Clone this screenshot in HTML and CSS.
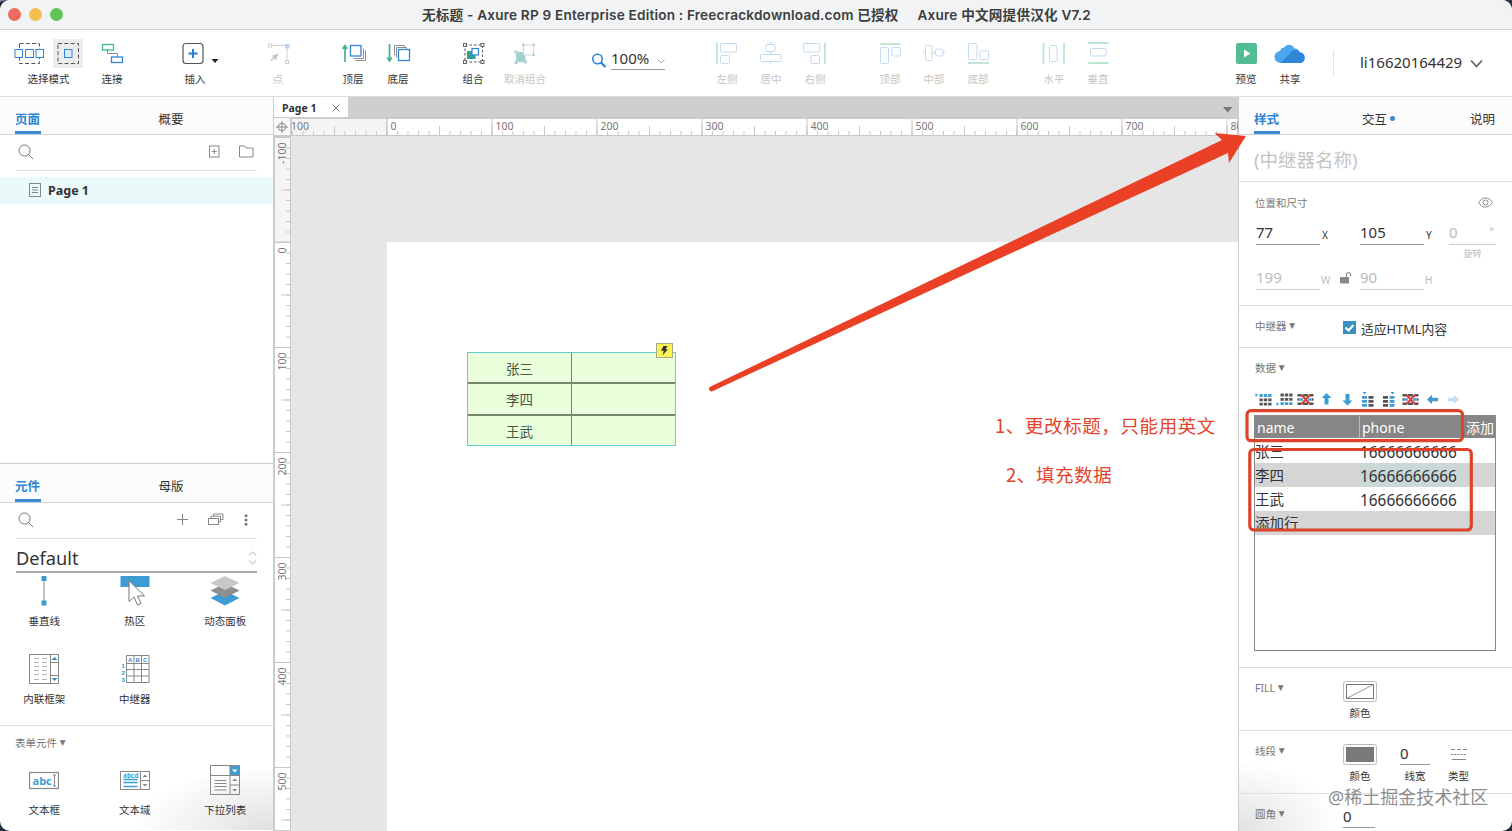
FILE: index.html
```html
<!DOCTYPE html>
<html lang="zh-CN">
<head>
<meta charset="utf-8">
<title>无标题 - Axure RP 9</title>
<link rel="stylesheet" href="styles.css">
</head>
<body>
<div class="window">
  <header class="titlebar">
    <div class="lights"><i class="light red"></i><i class="light amber"></i><i class="light green"></i></div>
    <div class="title"><span class="title-doc">无标题 - Axure RP 9 Enterprise Edition : Freecrackdownload.com 已授权</span><span class="title-ver">Axure 中文网提供汉化 V7.2</span></div>
  </header>

  <div class="toolbar">
    <div class="tool mode">
      <svg width="90" height="30" fill="none"><rect x="53" y="1" width="30" height="29" fill="#ececec"/><g stroke="#555" stroke-dasharray="4 2.3"><rect x="19.5" y="5.5" width="20" height="20"/><rect x="58" y="5.5" width="20.5" height="20"/></g><g stroke="#2e86d6" fill="#fff"><rect x="15" y="11.5" width="7.5" height="8"/><rect x="25.5" y="11.5" width="8" height="8"/><rect x="36" y="11.5" width="7.5" height="8"/><rect x="64.5" y="11.5" width="7.5" height="8" fill="#dfe9f5"/></g></svg>
      <span>选择模式</span>
    </div>
    <div class="tool">
      <svg width="44" height="30" fill="none"><path d="M17.5 12v3.5h10V19" stroke="#888"/><rect x="12.5" y="6.5" width="11" height="5.5" stroke="#3db88a" stroke-width="1.3"/><rect x="21.5" y="19" width="11" height="5.5" stroke="#2e86d6" stroke-width="1.3"/></svg>
      <span>连接</span>
    </div>
    <div class="tool g38 insert">
      <svg width="46" height="30" fill="none"><rect x="11" y="5.5" width="20" height="20" rx="3" stroke="#555" stroke-width="1.2"/><path d="M21 11v9M16.500 15.500h9" stroke="#1f7fd6" stroke-width="2"/><path d="M39.500 21h7l-3.500 4z" fill="#222"/></svg>
      <span>插入</span>
    </div>
    <div class="tool g38 off">
      <svg width="44" height="30" fill="none" stroke="#cfcfcf"><path d="M16 7.500h13M31 10v13"/><rect x="12.500" y="6" width="3" height="3"/><rect x="29.500" y="6.500" width="3.500" height="3.500" fill="#b5d5f2" stroke="#b5d5f2"/><rect x="29.500" y="22.500" width="3" height="3"/><path d="M22.500 15.500l-7.500 2.500 2.500 1-3 3.500 1 .7 3-3 1.200 2.500z" fill="#c4c4c4" stroke="none"/></svg>
      <span>点</span>
    </div>
    <div class="tool g31">
      <svg width="44" height="30" fill="none"><path d="M14 24V8M11.800 11L14 7.500l2.200 3.500" stroke="#3fb58c" stroke-width="1.700"/><g stroke="#8b8f99"><path d="M32.500 10.500V20.500H22.500M34.500 12.500V22.500H24.500"/></g><rect x="19.500" y="7.500" width="10.500" height="10.500" stroke="#3487d8" stroke-width="1.300" fill="#fff"/></svg>
      <span>顶层</span>
    </div>
    <div class="tool g1">
      <svg width="44" height="30" fill="none"><path d="M13.500 6V22M11.300 19.500l2.200 3.500 2.200-3.500" stroke="#3fb58c" stroke-width="1.700"/><g stroke="#8b8f99"><path d="M18.500 17.500V7.500H28.500V10M20.500 19.500V9.500H30.500V11"/></g><rect x="22.500" y="11.500" width="11" height="11" stroke="#3487d8" stroke-width="1.300" fill="#fff"/></svg>
      <span>底层</span>
    </div>
    <div class="tool g31">
      <svg width="44" height="30" fill="none"><rect x="14" y="7" width="17.500" height="17" stroke="#555" stroke-dasharray="2.500 2"/><g fill="#fff" stroke="#666"><rect x="12.500" y="5.500" width="3" height="3"/><rect x="30" y="5.500" width="3" height="3"/><rect x="12.500" y="22.500" width="3" height="3"/><rect x="30" y="22.500" width="3" height="3"/></g><rect x="16" y="13" width="8.500" height="8" fill="#2f9f98"/><rect x="21" y="10.500" width="6.500" height="6.500" fill="#fff" stroke="#2e86d6" stroke-width="1.200"/></svg>
      <span>组合</span>
    </div>
    <div class="tool g8 off">
      <svg width="44" height="30" fill="none"><path d="M13 14h9.500v10H13z" fill="#9fd2cf"/><rect x="20.500" y="7" width="10" height="10" fill="#fff" stroke="#c8d8e8"/><g fill="#b9cfdc"><rect x="11.500" y="12.500" width="3" height="3"/><rect x="11.500" y="23" width="3" height="3"/><rect x="21" y="22.500" width="3" height="3"/><rect x="19" y="5.500" width="2.500" height="2.500"/><rect x="29.500" y="5.500" width="2.500" height="2.500"/><rect x="29.500" y="15.500" width="2.500" height="2.500"/></g></svg>
      <span>取消组合</span>
    </div>
    <div class="zoom">
      <svg width="16" height="16" fill="none" stroke="#2b82d9"><circle cx="6.500" cy="6" r="4.700" stroke-width="1.600"/><path d="M10 9.500l4.500 4.500" stroke-width="2.200"/></svg>
      <div class="zoom-val">100%<svg width="8" height="5" fill="none" stroke="#aaa"><path d="M.5.5L4 4 7.500.5"/></svg></div>
    </div>
    <div class="tool g40 off align">
      <svg width="44" height="30"><path class="grn" d="M12 5v21"/><rect x="15.500" y="5.500" width="16" height="8.500" rx="1"/><rect x="15.500" y="17.500" width="9" height="8" rx="1"/></svg>
      <span>左侧</span>
    </div>
    <div class="tool off align">
      <svg width="44" height="30"><path d="M21.500 4v2.500M21.500 13.500v3M21.500 23.500V26"/><rect x="17" y="6.500" width="9" height="7" rx="1"/><rect x="11.500" y="16.500" width="20.500" height="7" rx="1"/></svg>
      <span>居中</span>
    </div>
    <div class="tool off align">
      <svg width="44" height="30"><path class="grn" d="M32 5v21"/><rect x="10.500" y="5.500" width="16" height="8.500" rx="1"/><rect x="18" y="17.500" width="8.500" height="8" rx="1"/></svg>
      <span>右侧</span>
    </div>
    <div class="tool g31 off align">
      <svg width="44" height="30"><path class="grn" d="M12 6h20.500"/><rect x="12.500" y="9.500" width="8" height="16" rx="1"/><rect x="24" y="9.500" width="8.500" height="8.500" rx="1"/></svg>
      <span>顶部</span>
    </div>
    <div class="tool off align">
      <svg width="44" height="30"><path d="M11 14.500h2.500M20 14.500h3.500M31 14.500h2"/><rect x="13.500" y="7.500" width="6.500" height="15" rx="1"/><rect x="23.500" y="11" width="7.500" height="7" rx="2"/></svg>
      <span>中部</span>
    </div>
    <div class="tool off align">
      <svg width="44" height="30"><path class="grn" d="M12 25h21"/><rect x="12.500" y="5.500" width="8.500" height="16" rx="1"/><rect x="24" y="13" width="8.500" height="8.500" rx="1"/></svg>
      <span>底部</span>
    </div>
    <div class="tool g32 off align">
      <svg width="44" height="30"><path class="grn" d="M11.500 5v21M32 5v21"/><rect x="17.500" y="7.500" width="7.500" height="16" rx="1"/></svg>
      <span>水平</span>
    </div>
    <div class="tool off align">
      <svg width="44" height="30"><path class="grn" d="M12 5h20.500M12 25h20.500"/><rect x="14.500" y="10.500" width="15.500" height="7.500" rx="1"/></svg>
      <span>垂直</span>
    </div>
    <div class="tool g104">
      <svg width="44" height="30"><rect x="12" y="5" width="21" height="21" rx="2" fill="#52bd93"/><path d="M20 11.500l6.500 4-6.500 4z" fill="#fff"/></svg>
      <span>预览</span>
    </div>
    <div class="tool">
      <svg width="44" height="30"><path d="M13 25a6 6 0 0 1-1-12 5 5 0 0 1 4-3.500 6 6 0 0 1 10.500 1 5 5 0 0 1 5 3.500 5.600 5.600 0 0 1 1 11z" fill="#4aa6ee"/><path d="M12.500 25L25 12.200a6 6 0 0 1 7 2.500 5.300 5.300 0 0 1 1 10.300z" fill="#2f86d8"/></svg>
      <span>共享</span>
    </div>
    <div class="user"><span>li16620164429</span><svg width="13" height="9" fill="none" stroke="#666" stroke-width="1.800"><path d="M1 1.500l5.500 6 5.500-6"/></svg></div>
  </div>

  <div class="main">
    <aside class="left">
      <section class="pages">
        <nav class="tabs"><b>页面</b><span>概要</span></nav>
        <div class="search">
          <svg width="16" height="16" fill="none" stroke="#777"><circle cx="6.500" cy="6.500" r="5.500"/><path d="M10.500 10.500l4.500 4.500"/></svg>
          <div class="search-acts">
            <svg width="11" height="13" fill="none" stroke="#888"><rect x=".5" y="1" width="9.500" height="11"/><path d="M5.250 4v5M2.750 6.500h5"/></svg>
            <svg width="15" height="13" fill="none" stroke="#888"><path d="M.5 1h5l1.500 2h7v9H.5z"/></svg>
          </div>
        </div>
        <div class="page-row"><svg width="12" height="14" fill="none" stroke="#7d8a8a"><rect x=".5" y=".5" width="11" height="13"/><path d="M3 4.500h6M3 7h6M3 9.500h6"/></svg><b>Page 1</b></div>
      </section>
      <section class="library">
        <nav class="tabs"><b>元件</b><span>母版</span></nav>
        <div class="search">
          <svg width="16" height="16" fill="none" stroke="#777"><circle cx="6.500" cy="6.500" r="5.500"/><path d="M10.500 10.500l4.500 4.500"/></svg>
          <div class="search-acts lib">
            <svg width="11" height="11" fill="none" stroke="#888"><path d="M5.500 0v11M0 5.500h11"/></svg>
            <svg width="16" height="13" fill="none" stroke="#888"><rect x=".5" y="5.500" width="10" height="6"/><path d="M3 5.500V3.200h9.500V9H10.500M5.500 3V1H15v5.500h-2.500"/></svg>
            <svg width="4" height="12" fill="#777"><circle cx="2" cy="1.700" r="1.500"/><circle cx="2" cy="6" r="1.500"/><circle cx="2" cy="10.300" r="1.500"/></svg>
          </div>
        </div>
        <div class="lib-select"><span>Default</span><svg width="9" height="14" fill="none" stroke="#aaa"><path d="M.8 4.500L4.500 1l3.700 3.500M.8 9.500L4.500 13l3.700-3.500"/></svg></div>
        <div class="widgets">
          <div class="widget"><svg width="30" height="30"><path d="M15 3v24" stroke="#8a8a8a"/><path d="M12.500 0h5v5h-5zM12.500 24.500h5v5h-5z" fill="#3f9bd3"/></svg><span>垂直线</span></div>
          <div class="widget"><svg width="30" height="30"><path d="M.5 0h29v11H.5z" fill="#3f9bd3"/><path d="M9 4.500v21l5-4.500 3.500 8 3.500-1.700-3.500-7.300h7z" fill="#fff" stroke="#777"/></svg><span>热区</span></div>
          <div class="widget"><svg width="30" height="30"><path d="M15 15l14.500 7L15 29.500.5 22z" fill="#3f9bd3"/><path d="M15 7.500l14.500 7L15 22 .5 14.500z" fill="#8e8e8e"/><path d="M15 0l14.500 7L15 14 .5 7z" fill="#c8c8c8"/></svg><span>动态面板</span></div>
          <div class="widget"><svg width="30" height="30" fill="none" stroke="#888"><rect x=".5" y=".5" width="29" height="29"/><path d="M21.500 0v30M21.500 8.500H30M21.500 21.500H30"/><path d="M5 4.500h5M13 4.500h5M5 8.500h5M13 8.500h5M5 12.500h5M13 12.500h5M5 16.500h5M13 16.500h5M5 20.500h5M13 20.500h5M5 25.500h5M13 25.500h5" stroke="#b5b5b5"/><path d="M25.500 3l3 3h-6zM25.500 27l3-3h-6z" fill="#2f8dd0" stroke="none"/></svg><span>内联框架</span></div>
          <div class="widget"><svg width="30" height="30" fill="none" stroke="#888"><path d="M6.500 1.500H29V28.500H6.500zM6.500 9.500H29M6.500 15.500H29M6.500 22H29M14 1.500v27M21.500 1.500v27"/><g class="mini"><text x="8" y="7.500">A</text><text x="15.500" y="7.500">B</text><text x="23" y="7.500">C</text><text x="1.500" y="14">1</text><text x="1.500" y="20.500">2</text><text x="1.500" y="27.500">3</text></g></svg><span>中继器</span></div>
        </div>
        <div class="forms">
          <h3>表单元件 <i>▼</i></h3>
          <div class="widgets">
            <div class="widget"><svg width="30" height="30" fill="none" stroke="#888"><rect x=".5" y="7.500" width="29" height="16" stroke-width="1.200"/><path d="M25.500 10v11M24 10h3M24 21h3"/><text class="abc" x="3.500" y="19.500">abc</text></svg><span>文本框</span></div>
            <div class="widget"><svg width="30" height="30" fill="none" stroke="#888"><rect x=".5" y="6.500" width="29" height="18"/><path d="M20.500 6.500v18M20.500 15.500h9"/><path d="M25 9.500l2.500 2.500h-5zM25 21.500l2.500-2.500h-5z" fill="#888" stroke="none"/><text class="abcd" x="3" y="12.500">abcd</text><path d="M3.500 14.500h14M3.500 17.500h14M3.500 21.500h14" stroke="#3f9bd3" stroke-width="1.300"/></svg><span>文本域</span></div>
            <div class="widget"><svg width="30" height="30" fill="none" stroke="#888"><rect x="20" y="1" width="9.500" height="9" fill="#3f9bd3" stroke="none"/><path d="M.5.5h29v29H.5zM.5 10.500h29M20 .5v29M20 20h9.500M4.500 15.500h12M4.500 18.500h12M4.500 21.500h12M4.500 25h12"/><path d="M22 4.500h5.500L24.750 7.500z" fill="#fff" stroke="none"/><path d="M24.750 13.500l2.500 2.500h-5zM24.750 26.500l2.500-2.500h-5z" fill="#888" stroke="none"/></svg><span>下拉列表</span></div>
          </div>
        </div>
      </section>
    </aside>

    <main class="center">
      <div class="doc-tabs"><div class="doc-tab"><b>Page 1</b><svg width="8" height="8" stroke="#777"><path d="M.5.5l7 7M7.500.5l-7 7"/></svg></div><svg class="tab-menu" width="10" height="6" fill="#777"><path d="M0 0h9.500L4.750 5.500z"/></svg></div>
      <div class="workspace">
        <div class="corner"><svg width="12" height="12" fill="none" stroke="#888"><circle cx="6" cy="6" r="3.800"/><path d="M6 0v12M0 6h12"/></svg></div>
        <svg class="ruler-h" width="947" height="18">
          <defs>
            <pattern id="h10" x="95.500" width="10.500" height="18" patternUnits="userSpaceOnUse"><path d="M.5 13v4" /></pattern>
            <pattern id="h50" x="95.500" width="52.500" height="18" patternUnits="userSpaceOnUse"><path d="M.5 8v9"/></pattern>
            <pattern id="h100" x="95.500" width="105" height="18" patternUnits="userSpaceOnUse"><path d="M.5 0v17"/></pattern>
          </defs>
          <rect width="947" height="18" fill="#fff"/><rect width="96" height="18" fill="#f5f5f5"/>
          <rect width="947" height="18" fill="url(#h10)"/><rect width="947" height="18" fill="url(#h50)"/><rect width="947" height="18" fill="url(#h100)"/>
          <path d="M0 17.500h947"/>
          <text x="0" y="12">100</text><text x="99.500" y="12">0</text><text x="204.500" y="12">100</text><text x="309.500" y="12">200</text><text x="414.500" y="12">300</text><text x="519.500" y="12">400</text><text x="624.500" y="12">500</text><text x="729.500" y="12">600</text><text x="834.500" y="12">700</text><text x="939.500" y="12">80</text>
        </svg>
        <svg class="ruler-v" width="17" height="695">
          <defs>
            <pattern id="v10" y="106" width="17" height="10.500" patternUnits="userSpaceOnUse"><path d="M12 .5h4"/></pattern>
            <pattern id="v50" y="106" width="17" height="52.500" patternUnits="userSpaceOnUse"><path d="M7 .5h9"/></pattern>
            <pattern id="v100" y="106" width="17" height="105" patternUnits="userSpaceOnUse"><path d="M0 .5h16"/></pattern>
          </defs>
          <rect width="17" height="695" fill="#fff"/><rect width="17" height="106" fill="#f5f5f5"/>
          <rect width="17" height="695" fill="url(#v10)"/><rect width="17" height="695" fill="url(#v50)"/><rect width="17" height="695" fill="url(#v100)"/>
          <path d="M16.500 0v695"/>
          <g transform="rotate(-90)" text-anchor="end"><text x="-6.500" y="12">-100</text><text x="-111.500" y="12">0</text><text x="-216.500" y="12">100</text><text x="-321.500" y="12">200</text><text x="-426.500" y="12">300</text><text x="-531.500" y="12">400</text><text x="-636.500" y="12">500</text></g>
        </svg>
        <div class="canvas">
          <div class="artboard">
            <div class="repeater">
              <div class="cell">张三</div><div class="cell"></div>
              <div class="cell">李四</div><div class="cell"></div>
              <div class="cell">王武</div><div class="cell"></div>
              <svg class="bolt" width="17" height="15"><rect x=".5" y=".5" width="16" height="14" fill="#fbf356" stroke="#a9a98a"/><path d="M7.500 3h4L9.500 6.300h2.300L6.500 12.500l1.300-4.700H5z" fill="#333"/></svg>
            </div>
          </div>
        </div>
      </div>
    </main>

    <aside class="right">
      <nav class="tabs"><b>样式</b><span>交互<i></i></span><span>说明</span></nav>
      <div class="sec name-field">(中继器名称)</div>
      <div class="sec pos">
        <div class="pos-head"><h3>位置和尺寸</h3><svg width="15" height="11" fill="none" stroke="#888"><path d="M.7 5.500C4 -.6 11 -.6 14.300 5.500 11 11.600 4 11.600.7 5.500z"/><circle cx="7.500" cy="5.500" r="2.500"/></svg></div>
        <div class="fields">
          <span class="inp">77</span><em>X</em><span class="inp">105</span><em>Y</em><span class="inp dim">0<sup>°</sup></span>
          <small>旋转</small>
          <span class="inp dim">199</span><em class="dim">W</em><svg class="lock" width="12" height="13"><rect x="0" y="6" width="9" height="6.500" rx=".8" fill="#888"/><path d="M6.500 6V3.500a2 2 0 0 1 4 0V5" fill="none" stroke="#888" stroke-width="1.200"/></svg><span class="inp dim">90</span><em class="dim">H</em>
        </div>
      </div>
      <div class="sec rep"><h3>中继器 <i>▼</i></h3><label><svg width="13" height="13"><rect width="13" height="13" fill="#3a8fbf"/><path d="M2.500 6.500l3 3 5-5.500" fill="none" stroke="#fff" stroke-width="2.200"/></svg>适应HTML内容</label></div>
      <div class="sec data">
        <h3>数据 <i>▼</i></h3>
        <svg class="data-tools" width="206" height="16">
          <defs>
            <path id="bars" d="M0 0h3.300M4.300 0h3.400M8.700 0H12"/>
            <g id="cross" fill="none"><path d="M.5 3.300h4.300M6 3.300h5M12.200 3.300h4.300M.5 11.700h4.300M6 11.700h5M12.200 11.700h4.300M.5 7.500h2M14.500 7.500h2" stroke="#555" stroke-width="2.600"/><path d="M2.800 7.500h3M11.200 7.500h3" stroke="#3f9bd3" stroke-width="2.600"/><path d="M4.500 3l8.500 9M13 3L4.500 12" stroke="#d9403c" stroke-width="2"/></g>
          </defs>
          <g stroke-width="2.800">
            <use href="#bars" x="4.500" y="3.500" stroke="#3f9bd3"/><use href="#bars" x="4.500" y="7.800" stroke="#555"/><use href="#bars" x="4.500" y="12.100" stroke="#555"/><path d="M.5 1l2.500 2-2.500 2z" fill="#3f9bd3"/>
            <use href="#bars" x="25.500" y="3" stroke="#555"/><use href="#bars" x="25.500" y="7.300" stroke="#555"/><use href="#bars" x="25.500" y="11.600" stroke="#3f9bd3"/><path d="M21.500 10l2.500 2-2.500 2z" fill="#3f9bd3"/>
          </g>
          <use href="#cross" x="42"/><use href="#cross" x="147"/>
          <path d="M71.500 1l5 5h-3v6.500h-4v-6.500h-3zM92.500 13.500l5-5h-3v-6.500h-4v6.500h-3z" fill="#3f9bd3"/>
          <g fill="none" stroke-width="5"><path d="M109.500 4v12" stroke="#3f9bd3" stroke-dasharray="2.800 1.200"/><path d="M116 4v12" stroke="#555" stroke-dasharray="2.800 1.200"/><path d="M130.500 4v12" stroke="#555" stroke-dasharray="2.800 1.200"/><path d="M137 4v12" stroke="#3f9bd3" stroke-dasharray="2.800 1.200"/></g>
          <path d="M107.500 0h4l-2 2.500zM135.500 0h4l-2 2.500z" fill="#3f9bd3"/>
          <path d="M172 7.500l5-4.700v2.900h6v3.600h-6v2.900z" fill="#3f9bd3"/><path d="M204 7.500l-5-4.700v2.900h-6v3.600h6v2.900z" fill="#c3dfef"/>
        </svg>
        <div class="dtable">
          <div class="drow dhead"><span>name</span><span>phone</span><span>添加</span></div>
          <div class="drow"><span>张三</span><span>16666666666</span></div>
          <div class="drow alt"><span>李四</span><span class="sel">16666666666</span></div>
          <div class="drow"><span>王武</span><span>16666666666</span></div>
          <div class="drow alt"><span>添加行</span></div>
        </div>
      </div>
      <div class="sec style-row"><h3>FILL <i>▼</i></h3><div class="ctl"><svg width="34" height="21" fill="none"><rect x=".5" y=".5" width="33" height="20" rx="2" stroke="#bbb"/><rect x="3.500" y="3.500" width="27" height="14" stroke="#777"/><path d="M3.500 17.500l27-14" stroke="#999"/></svg><span>颜色</span></div></div>
      <div class="sec style-row"><h3>线段 <i>▼</i></h3><div class="ctl"><svg width="34" height="21" fill="none"><rect x=".5" y=".5" width="33" height="20" rx="2" stroke="#bbb"/><rect x="3" y="3" width="28" height="15" fill="#797979"/></svg><span>颜色</span></div><div class="ctl num"><u>0</u><span>线宽</span></div><div class="ctl kind"><svg width="18" height="21" fill="none" stroke="#888"><path d="M1 5.500h16" stroke-dasharray="4 2"/><path d="M1 10.500h16" stroke-dasharray="2 1.200"/><path d="M2 15.500h14"/></svg><span>类型</span></div></div>
      <div class="style-row last"><h3>圆角 <i>▼</i></h3><div class="ctl rad"><u>0</u></div></div>
    </aside>
  </div>

  <svg class="marks" width="1512" height="831" fill="none">
    <path d="M710.200 386.700L1222 140 1214.500 133 1246 136 1229 163 1228 153 712.300 391.200A2.500 2.500 0 0 1 710.200 386.700z" fill="#ea4025"/>
    <rect x="1247" y="410.700" width="215.500" height="30" rx="4" stroke="#dc432b" stroke-width="3.200"/>
    <rect x="1249.800" y="449.500" width="221.500" height="80.500" rx="4" stroke="#dc432b" stroke-width="3.200"/>
  </svg>
  <p class="note one">1、更改标题，只能用英文</p>
  <p class="note two">2、填充数据</p>
  <p class="watermark">@稀土掘金技术社区</p>
</div>
</body>
</html>
```

FILE: styles.css
```css
* { box-sizing: border-box; }

body {
  margin: 0;
  background: linear-gradient(90deg, #8780a8 0, #8780a8 50%, #2b3648 50%);
  font-family: "Noto Sans", "Noto Sans CJK SC", sans-serif;
  font-size: 10.5px;
  color: #333;
  overflow: hidden;
}

i, em { font-style: normal; }
h3, p { margin: 0; font-weight: 400; }
svg { display: block; flex: none; }

.window {
  position: relative;
  width: 1512px;
  height: 831px;
  background: #fff;
  border-radius: 10px;
  overflow: hidden;
  box-shadow: 0 14px 0 14px #26303f;
}

.titlebar {
  display: flex;
  align-items: center;
  height: 30px;
  background: #f1f3f4;
  border-bottom: 1px solid #d2d4d5;
}
.lights { display: flex; gap: 8px; padding-left: 8px; width: 422px; }
.light { width: 13px; height: 13px; border-radius: 50%; }
.red { background: #ec6a5e; }
.amber { background: #f5bf4f; }
.green { background: #61c554; }
.title {
  display: flex;
  margin-top: -1px;
  font: 600 13.600px "Inter", "Noto Sans CJK SC", sans-serif;
  letter-spacing: .2px;
  color: #3c3e40;
  white-space: nowrap;
}
.title-doc { width: 495.500px; }

.toolbar {
  display: flex;
  height: 67px;
  padding-top: 8px;
  border-bottom: 1px solid #dcdcdc;
}
.tool {
  display: flex;
  flex-direction: column;
  align-items: center;
  width: 44px;
  flex: none;
  line-height: 22px;
  white-space: nowrap;
}
.tool > svg { overflow: visible; }
.tool.mode { width: 90px; }
.tool.mode span { margin-left: 7px; }
.tool.insert { width: 46px; }
.tool.off { color: #c6c6c6; }
.g1 { margin-left: 1px; }
.g8 { margin-left: 8px; }
.g31 { margin-left: 31px; }
.g32 { margin-left: 32px; }
.g38 { margin-left: 38px; }
.g40 { margin-left: 40px; }
.g104 { margin-left: 104px; }
.align svg { fill: none; stroke: #c3dbf1; }
.align .grn { stroke: #b9e5d4; stroke-width: 1.800; }

.zoom { display: flex; gap: 4px; margin-left: 44px; padding-top: 11px; width: 74px; }
.zoom > svg { margin-top: 4px; }
.zoom-val {
  display: flex;
  align-items: center;
  justify-content: space-between;
  width: 54px;
  height: 21px;
  padding-bottom: 2px;
  border-bottom: 1px solid #999;
  font-size: 15px;
}
.zoom-val svg { margin-top: 7px; }

.user {
  display: flex;
  align-items: center;
  gap: 8px;
  height: 26px;
  margin: 12px 0 0 21px;
  padding: 0 0 2px 26px;
  border-left: 1px solid #e2e2e2;
  font-size: 15px;
}
.user svg { margin-top: 2px; }

.main { display: flex; height: 734px; }
.left { width: 274px; border-right: 1px solid #ccc; }

.tabs {
  display: flex;
  height: 38px;
  background: #fcfcfc;
  border-bottom: 1px solid #d0d0d0;
  font-size: 12.500px;
  line-height: 45px;
}
.tabs b { height: 37px; border-bottom: 3px solid #3a8bd3; color: #2f84d3; font-weight: 600; width: 26px; }
.left .tabs { padding-left: 15px; }
.left .tabs span { margin-left: 117.500px; }

.pages { height: 366px; }
.library { border-top: 1px solid #ccc; }
.library .tabs { height: 39px; line-height: 46px; }
.library .tabs b { height: 38px; }
.search {
  display: flex;
  justify-content: space-between;
  align-items: center;
  height: 36px;
  margin: 0 16px;
  padding: 0 3px 2px 2px;
  border-bottom: 1px solid #dcdcdc;
}
.search-acts { display: flex; align-items: center; gap: 19px; }
.search-acts.lib { gap: 20px; padding-right: 6px; }
.page-row {
  display: flex;
  align-items: center;
  gap: 7px;
  height: 27px;
  margin-top: 6px;
  padding: 0 0 1px 29px;
  background: #eafafa;
  font-size: 12.500px;
}

.lib-select {
  display: flex;
  align-items: center;
  justify-content: space-between;
  height: 34px;
  margin: 0 16px;
  padding-top: 5px;
  border-bottom: 2px solid #aaa;
  font-size: 18.200px;
}
.lib-select svg { margin-top: 1px; }
.widgets { display: grid; grid-template-columns: repeat(3, 90.500px); margin-left: -1px; padding-top: 3px; }
.widget {
  display: flex;
  flex-direction: column;
  align-items: center;
  height: 78px;
  line-height: 30px;
}
.mini text { font: 700 6px "Liberation Sans", sans-serif; fill: #2f8dd0; stroke: none; }
.abc { font: 700 11px "Open Sans", sans-serif; fill: #3f9bd3; stroke: none; }
.abcd { font: 700 6.500px "Open Sans", sans-serif; fill: #3f9bd3; stroke: none; }
.library > .widgets { height: 152px; }
.forms {
  height: 105px;
  padding-top: 8px;
  border-top: 1px solid #dcdcdc;
  background: radial-gradient(140px 65px at 100% 100%, #e0e0e0, rgba(255, 255, 255, 0));
}
h3 { font-size: 10.500px; line-height: 18px; color: #777; white-space: nowrap; }
h3 i { font: 7.500px "DejaVu Sans", sans-serif; position: relative; top: -2px; }
.forms h3 { padding-left: 15px; }
.forms .widgets { padding-top: 13px; }

.center { display: flex; flex-direction: column; width: 964px; }
.doc-tabs { display: flex; justify-content: space-between; height: 21px; background: #cfcfcf; }
.doc-tab {
  display: flex;
  align-items: center;
  justify-content: space-between;
  width: 74px;
  padding: 1px 8px 0;
  background: #fff;
  font-size: 10.500px;
}
.tab-menu { margin: 10px 5px 0 0; }
.workspace { display: grid; grid-template: 18px 695px / 17px 947px; border-top: 1px solid #ccc; }
.corner {
  display: flex;
  align-items: center;
  justify-content: center;
  background: #fafafa;
  border: solid #ccc;
  border-width: 0 1px 1px 0;
}
.ruler-h, .ruler-v { stroke: #c8c8c8; overflow: hidden; }
.ruler-h text, .ruler-v text { font-size: 10.500px; fill: #777; stroke: none; }
.canvas { padding: 106px 0 0 96px; background: #e6e6e6; }
.artboard { height: 589px; padding: 110px 0 0 80px; background: #fff; }
.repeater {
  position: relative;
  display: grid;
  grid-template: 32px 32px 30px / 104px 105px;
  width: 209px;
  height: 94px;
  background: #eaffdb;
  outline: 1px solid #62cfcd;
  outline-offset: -1px;
}
.cell {
  display: flex;
  align-items: center;
  justify-content: center;
  font-size: 13.500px;
  color: #4a5742;
  border-bottom: 2px solid #76876a;
  margin: 0 1px;
}
.cell:nth-child(odd) { border-right: 1px solid #76876a; margin-right: -1px; }
.cell:nth-child(1) { padding-top: 1px; }
.cell:nth-child(5), .cell:nth-child(6) { border-bottom: 0; }
.bolt { position: absolute; left: 189px; top: -9px; }

.right { width: 274px; border-left: 1px solid #ccc; background: radial-gradient(100px 70px at 0 100%, #e2e2e2, rgba(255, 255, 255, 0)); }
.right .tabs { padding: 0 17px 0 15px; justify-content: space-between; }
.right .tabs i {
  display: inline-block;
  width: 5px;
  height: 5px;
  margin-left: 3px;
  border-radius: 50%;
  background: #3a8bd3;
  vertical-align: 3px;
}
.right .tabs span:nth-child(2) { margin-left: 7px; }
.sec { border-bottom: 1px solid #dedede; }
.name-field { height: 47px; padding-left: 15px; font-size: 18.500px; line-height: 50px; color: #c4c4c4; }
.pos { height: 124px; padding: 12px 16px 0 16px; }
.pos-head { display: flex; justify-content: space-between; align-items: center; padding-right: 3px; }
.pos-head svg { margin-top: -2px; }
.fields {
  display: grid;
  grid-template-columns: 64px 20px 20px 64px 25px 47px;
  grid-template-rows: 33px 12px 33px;
  align-items: end;
  margin-left: 1px;
}
.inp { height: 22px; border-bottom: 1px solid #999; font-size: 15px; line-height: 19px; }
.inp.dim { border-color: #ccc; }
.inp:nth-child(3) { grid-column: 4; }
.dim { color: #bbb; }
.inp sup { float: right; font-size: 11px; line-height: 16px; margin-right: 2px; }
.fields em { width: 20px; padding-left: 2px; font-size: 10px; line-height: 20px; }
.fields em.dim { padding-left: 1px; }
.fields small { position: relative; top: 4px; grid-column: 6; text-align: center; font-size: 9px; line-height: 14px; color: #bbb; }
.fields small + .inp { grid-column: 1; }
.lock { margin: 0 0 6px 0; }
.rep { display: flex; height: 42px; padding: 11px 0 0 16px; }
.rep h3, .style-row h3 { width: 88px; flex: none; }
.rep label { display: flex; align-items: center; gap: 5px; height: 20px; margin-top: 1px; font-size: 12.800px; }
.rep label svg { margin-top: -1px; }
.data { height: 320px; padding: 11px 0 0 15px; }
.data h3 { padding-left: 1px; }
.data-tools { margin: 15px 0 0 1px; }
.dtable {
  width: 242px;
  height: 236px;
  margin-top: 7px;
  border: 1px solid #888;
  overflow: hidden;
  font-size: 14.500px;
  line-height: 25px;
}
.drow { display: grid; grid-template-columns: 105px 104px 60px; height: 24px; white-space: nowrap; }
.drow:not(.dhead) span:nth-child(2) { font-size: 15.400px; line-height: 27px; height: 24px; }
.drow.alt { background: #d5d5d5; }
.drow .sel { background: #cad8d7; }
.dhead { height: 23px; background: #868686; color: #fff; margin-top: -1px; font-size: 14px; line-height: 25px; }
.dhead + .drow { margin-top: 1px; }
.dhead span { height: 23px; padding-left: 2px; border-right: 1px solid #bbb; }
.dhead span:nth-child(2) { border: 0; }
.dhead span:nth-child(3) { padding-left: 2px; font-size: 14px; border: 0; }
.style-row { display: flex; height: 63px; padding: 11px 0 0 16px; }
.style-row h3 { margin-top: -.5px; }
.ctl { display: flex; flex-direction: column; align-items: center; line-height: 22px; padding-top: 2px; }
.ctl u {
  width: 30px;
  height: 21px;
  border-bottom: 1px solid #999;
  font-size: 15px;
  line-height: 18px;
  text-decoration: none;
}
.num { margin-left: 23px; }
.kind { margin-left: 18px; }
.last { height: 37px; }
.rad u { width: 32px; }

.marks { position: absolute; left: 0; top: 0; }
.note {
  position: absolute;
  font: 18.500px/24px "Noto Sans CJK SC", sans-serif;
  color: #e2452c;
  letter-spacing: .6px;
  white-space: nowrap;
}
.one { left: 995px; top: 413px; }
.two { left: 1006px; top: 462px; }
.watermark {
  position: absolute;
  left: 1328px;
  top: 785px;
  font-size: 18px;
  line-height: 24px;
  color: rgba(120, 120, 120, .85);
  white-space: nowrap;
}
```
